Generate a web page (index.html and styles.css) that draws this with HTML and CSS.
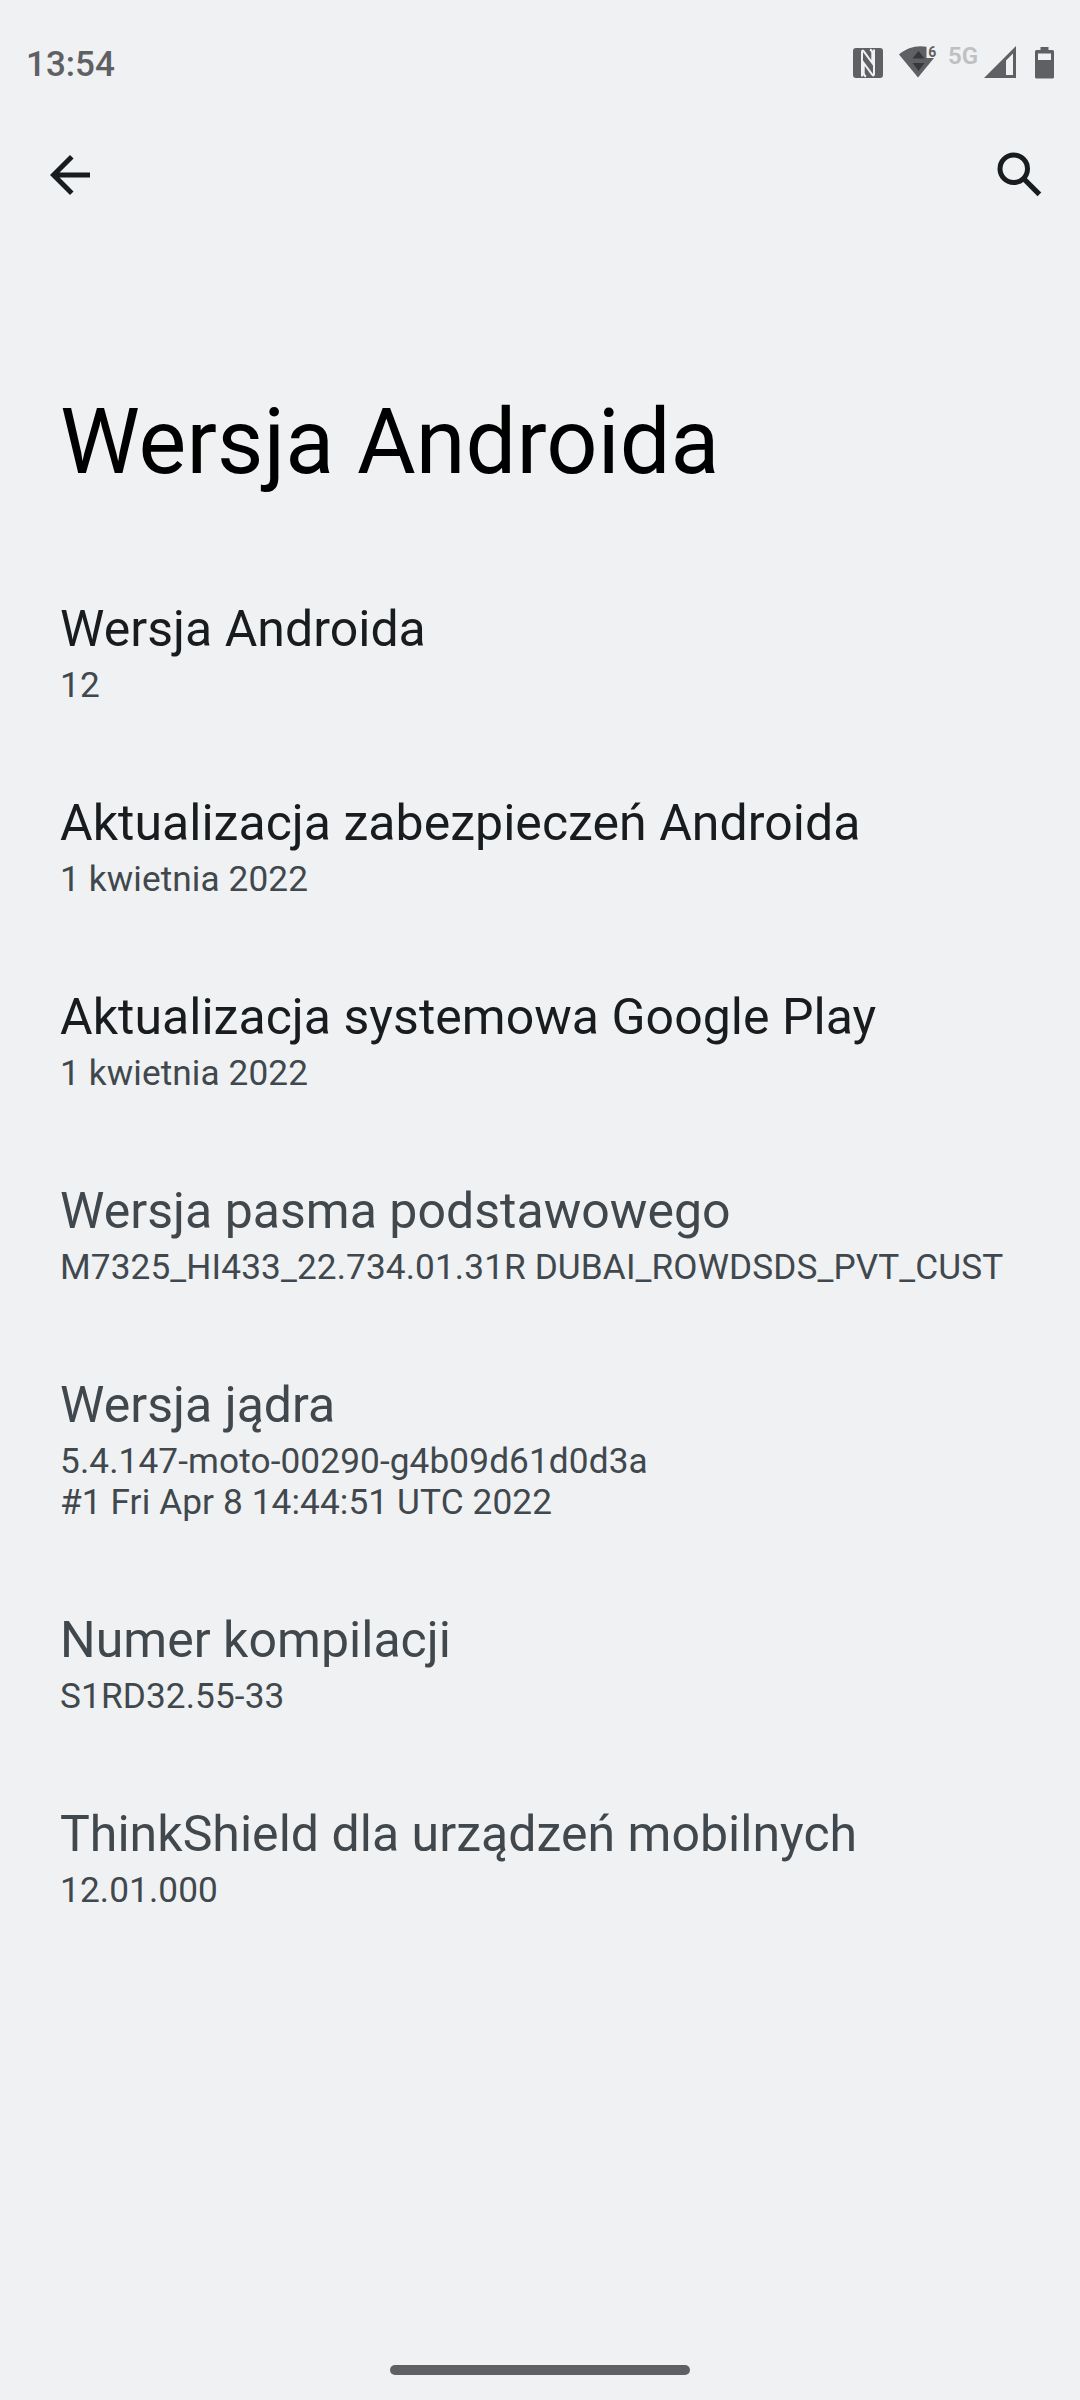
FILE: index.html
```html
<!DOCTYPE html>
<html lang="pl">
<head>
<meta charset="utf-8">
<title>Wersja Androida</title>
<link rel="stylesheet" href="styles.css">
</head>
<body>
<div class="screen">
  <header class="status">
    <span class="clock">13:54</span>
    <div class="status-icons">
      <svg class="nfc" width="30" height="30" viewBox="0 0 30 30"><rect width="30" height="30" rx="3" fill="#5f6063"/><path d="M9 28.500V4Q9 1.500 10.800 3.500L19.300 15V5Q19.300 2.500 17 1.500M21 1.500V26Q21 28.500 19.200 26.500L10.700 15V25Q10.700 27.500 13 28.500" fill="none" stroke="#eff1f3" stroke-width="2"/></svg>
      <svg class="wifi" width="42" height="32" viewBox="0 0 42 32"><path d="M0 8.500C8 1.500 18-1 27.500.800V12H35L19 31.500Z" fill="#5f6063"/><path d="M13.500 12.500 19.500 5l6 7.500ZM13.500 17h12l-6 8Z" fill="#36373a"/><text x="29.200" y="10.800" class="wifi-gen">6</text></svg>
      <span class="net">5G</span>
      <svg class="signal" width="32" height="32" viewBox="0 0 32 32"><path fill-rule="evenodd" d="M32 0V32H0ZM29 7.500 22 14.500V29H29Z" fill="#5f6063"/></svg>
      <svg class="battery" width="19" height="32" viewBox="0 0 19 32"><path fill-rule="evenodd" d="M5.500 0h8v3H17.500q1.500 0 1.500 1.500V30q0 1.500-1.500 1.500h-16Q0 31.500 0 30V4.500Q0 3 1.500 3h4ZM3 6.500V13H16V6.500Z" fill="#5f6063"/></svg>
    </div>
  </header>
  <nav class="toolbar">
    <svg class="back" width="60" height="60" viewBox="0 0 24 24"><path d="M20 11H7.830l5.590-5.590L12 4l-8 8 8 8 1.410-1.410L7.830 13H20v-2z" fill="#191c1e"/></svg>
    <svg class="search" width="60" height="60" viewBox="0 0 24 24"><g fill="none" stroke="#191c1e"><circle cx="9.500" cy="9.500" r="5.500" stroke-width="2"/><path d="M13.500 13.500 19.750 19.750" stroke-width="2.100"/></g></svg>
  </nav>
  <h1 class="title">Wersja Androida</h1>
  <main class="list">
    <section class="item"><h2>Wersja Androida</h2><p>12</p></section>
    <section class="item"><h2>Aktualizacja zabezpieczeń Androida</h2><p>1 kwietnia 2022</p></section>
    <section class="item"><h2>Aktualizacja systemowa Google Play</h2><p>1 kwietnia 2022</p></section>
    <section class="item muted"><h2>Wersja pasma podstawowego</h2><p>M7325_HI433_22.734.01.31R DUBAI_ROWDSDS_PVT_CUST</p></section>
    <section class="item muted"><h2>Wersja jądra</h2><p>5.4.147-moto-00290-g4b09d61d0d3a<br>#1 Fri Apr 8 14:44:51 UTC 2022</p></section>
    <section class="item muted"><h2>Numer kompilacji</h2><p>S1RD32.55-33</p></section>
    <section class="item muted"><h2>ThinkShield dla urządzeń mobilnych</h2><p>12.01.000</p></section>
  </main>
  <div class="home"></div>
</div>
</body>
</html>
```
FILE: styles.css
```css
* { box-sizing: border-box; }
body { margin: 0; background: #eff1f3; font-family: Roboto, sans-serif; }
svg { display: block; flex: none; overflow: visible; }
.screen { width: 1080px; height: 2400px; display: flex; flex-direction: column; }
.status { height: 124px; padding: 0 26px; display: flex; justify-content: space-between; align-items: flex-start; }
.clock { padding-top: 44px; font-size: 35px; line-height: 41px; font-weight: 500; color: #5f6063; }
.status-icons { padding-top: 46px; display: flex; align-items: flex-start; }
.nfc { margin: 2px 16px 0 0; }
.wifi { margin-right: 7px; }
.wifi-gen { font-size: 14px; font-weight: 700; fill: #5f6063; }
.net { width: 36px; padding-top: 1px; font-size: 24px; line-height: 18px; font-weight: 600; color: #bfc0c2; }
.battery { margin: 1px 0 0 19px; }
.toolbar { height: 102px; padding: 0 30px 0 40px; display: flex; justify-content: space-between; align-items: center; }
.title { margin: 164px 0 0 60px; font-size: 90px; line-height: 106px; font-weight: 400; letter-spacing: 0.13px; color: #000; }
.list { padding: 103px 60px 0; flex: 1; }
.item { padding-bottom: 87px; }
.item h2 { margin: 0; font-size: 50px; line-height: 60px; font-weight: 400; letter-spacing: 0.03px; color: #191c1e; }
.item p { margin: 0; padding-top: 6px; font-size: 35.2px; line-height: 41px; letter-spacing: 0.11px; color: #41484d; }
.item.muted h2 { color: #41484d; }
.home { width: 300px; height: 10px; border-radius: 5px; background: #5f6063; margin: 0 auto 25px; }
```
